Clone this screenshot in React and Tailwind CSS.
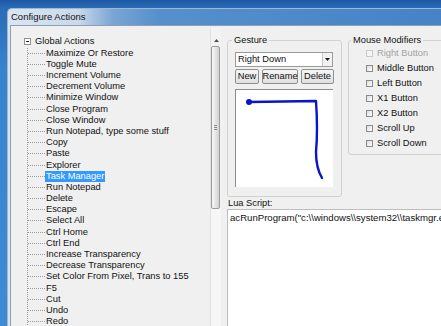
const actions = [
  'Maximize Or Restore',
  'Toggle Mute',
  'Increment Volume',
  'Decrement Volume',
  'Minimize Window',
  'Close Program',
  'Close Window',
  'Run Notepad, type some stuff',
  'Copy',
  'Paste',
  'Explorer',
  'Task Manager',
  'Run Notepad',
  'Delete',
  'Escape',
  'Select All',
  'Ctrl Home',
  'Ctrl End',
  'Increase Transparency',
  'Decrease Transparency',
  'Set Color From Pixel, Trans to 155',
  'F5',
  'Cut',
  'Undo',
  'Redo',
]

const modifiers = [
  { label: 'Right Button', disabled: true },
  { label: 'Middle Button' },
  { label: 'Left Button' },
  { label: 'X1 Button' },
  { label: 'X2 Button' },
  { label: 'Scroll Up' },
  { label: 'Scroll Down' },
]

function Tree() {
  return (
    <div className="flex-1 pt-[8.4px] pl-[13px] overflow-hidden">
      <div className="flex items-center h-[11.2px]">
        <span className="w-[7px] h-[7px] border border-[#919191] bg-white flex items-center justify-center">
          <span className="w-[3px] h-px bg-[#222]" />
        </span>
        <span className="ml-[4px]">Global Actions</span>
      </div>
      <div className="ml-[3px] border-l border-dotted border-[#9a9a9a]">
        {actions.map((a) => (
          <div key={a} className="flex items-center h-[11.2px]">
            <span className="w-[17px] border-t border-dotted border-[#9a9a9a]" />
            <span
              className={`px-[1px] leading-[11px] whitespace-nowrap ${
                a === 'Task Manager' ? 'bg-[#3399ff] text-white' : ''
              }`}
            >
              {a}
            </span>
          </div>
        ))}
      </div>
    </div>
  )
}

function ScrollBar() {
  return (
    <div className="w-[11px] flex flex-col border-l border-[#e2e2e2] bg-[#f3f3f3]">
      <div className="h-[18px] flex items-end justify-center pb-[4px]">
        <svg width="5" height="3" viewBox="0 0 5 3">
          <path d="M0 3 L2.5 0 L5 3 Z" fill="#4d4d4d" />
        </svg>
      </div>
      <div className="h-[163px] mr-px rounded-[2px] border border-[#9c9c9c] bg-[linear-gradient(90deg,#f7f7f7,#e6e6e6_50%,#d2d2d2)] flex items-center justify-center">
        <div className="flex flex-col gap-px">
          <span className="w-[3px] h-px bg-[#8a8a8a]" />
          <span className="w-[3px] h-px bg-[#8a8a8a]" />
          <span className="w-[3px] h-px bg-[#8a8a8a]" />
        </div>
      </div>
      <div className="flex-1 bg-[#f6f6f6]" />
    </div>
  )
}

function Btn({ children, w }) {
  return (
    <div
      className={`${w} h-[15px] rounded-[2px] border border-[#8e8f8f] bg-[linear-gradient(180deg,#f6f6f6,#e0e0e0)] flex items-center justify-center`}
    >
      {children}
    </div>
  )
}

function Gesture() {
  return (
    <fieldset className="w-[115px] shrink-0 border border-[#d2d2d2] rounded-[3px] px-[3px] pb-[9px]">
      <legend className="ml-[1px] px-[2px] leading-[11px]">Gesture</legend>
      <div className="pl-[4px] pt-[6px] flex flex-col">
        <div className="w-[98px] h-[15px] border border-[#9a9a9a] bg-white flex items-center">
          <span className="flex-1 pl-[2px]">Right Down</span>
          <span className="w-[10px] h-[13px] border-l border-[#c8c8c8] bg-[#f2f2f2] flex items-center justify-center">
            <svg width="5" height="3" viewBox="0 0 5 3">
              <path d="M0 0 L5 0 L2.5 3 Z" fill="#1a1a1a" />
            </svg>
          </span>
        </div>
        <div className="flex gap-[3px] mt-[2px]">
          <Btn w="w-[24px]">New</Btn>
          <Btn w="w-[36px]">Rename</Btn>
          <Btn w="w-[33px]">Delete</Btn>
        </div>
        <div className="mt-[5px] w-[98px] h-[98px] bg-white border-t border-l border-[#8c8c8c] border-r-white border-b-white">
          <svg width="97" height="97" viewBox="0 0 97 97">
            <path
              d="M13 12 L80 11 Q82 40 80 62 Q80 78 86 88"
              fill="none"
              stroke="#0a14c8"
              strokeWidth="2.4"
              strokeLinecap="round"
              strokeLinejoin="round"
            />
            <circle cx="13" cy="12" r="3" fill="#0a14c8" />
          </svg>
        </div>
      </div>
    </fieldset>
  )
}

function Modifiers() {
  return (
    <fieldset className="w-[110px] shrink-0 self-start border border-[#d2d2d2] rounded-[3px] px-[2px] pb-[3px]">
      <legend className="px-[2px] leading-[11px] whitespace-nowrap">Mouse Modifiers</legend>
      <div className="pl-[15px]">
        {modifiers.map((m) => (
          <div key={m.label} className="h-[15px] flex items-center">
            <span
              className={`w-[7px] h-[7px] border ${
                m.disabled ? 'border-[#c9c9c9] bg-[#f4f4f4]' : 'border-[#8a8a8a] bg-[linear-gradient(135deg,#dcdcdc,#ffffff)]'
              }`}
            />
            <span className={`ml-[4px] whitespace-nowrap ${m.disabled ? 'text-[#a3a3a3]' : ''}`}>{m.label}</span>
          </div>
        ))}
      </div>
    </fieldset>
  )
}

export default function App() {
  return (
    <div
      className="w-[441px] h-[326px] overflow-hidden bg-[linear-gradient(180deg,#1d58a5_0px,#2a6bb6_8px,#3883ce_70px,#3d8bd4_100%)] pl-[7px] pt-[8px] text-[9.3px] text-[#111]"
      style={{ fontFamily: '"Liberation Sans", Arial, sans-serif' }}
    >
      <div className="h-full rounded-tl-[5px] border-l border-t border-[#9fb7d2] bg-[linear-gradient(90deg,#dae5f1_0px,#cad9eb_70px,#7aa5d3_105px,#5690cc_150px,#4583c6_100%)] flex flex-col">
        <div className="h-[16px] shrink-0 pl-[3px] flex items-center text-[9.5px] text-[#111]">Configure Actions</div>
        <div className="flex-1 ml-[2px] border-l border-t border-[#8aa0b9] bg-[#f0f0f0] flex pt-[2px]">
          <div className="w-[210px] flex">
            <Tree />
            <ScrollBar />
          </div>
          <div className="flex-1 pl-[6px] flex flex-col pt-[7px] overflow-hidden">
            <div className="flex gap-[6px]">
              <Gesture />
              <Modifiers />
            </div>
            <div className="pl-[1px] leading-[11px] mt-[1px]">Lua Script:</div>
            <div className="flex-1 w-[240px] border border-[#bdbdbd] bg-white pl-[2px] pt-[1px] whitespace-nowrap text-[9.6px]">
              acRunProgram("c:\\windows\\system32\\taskmgr.exe")
            </div>
          </div>
        </div>
      </div>
    </div>
  )
}
